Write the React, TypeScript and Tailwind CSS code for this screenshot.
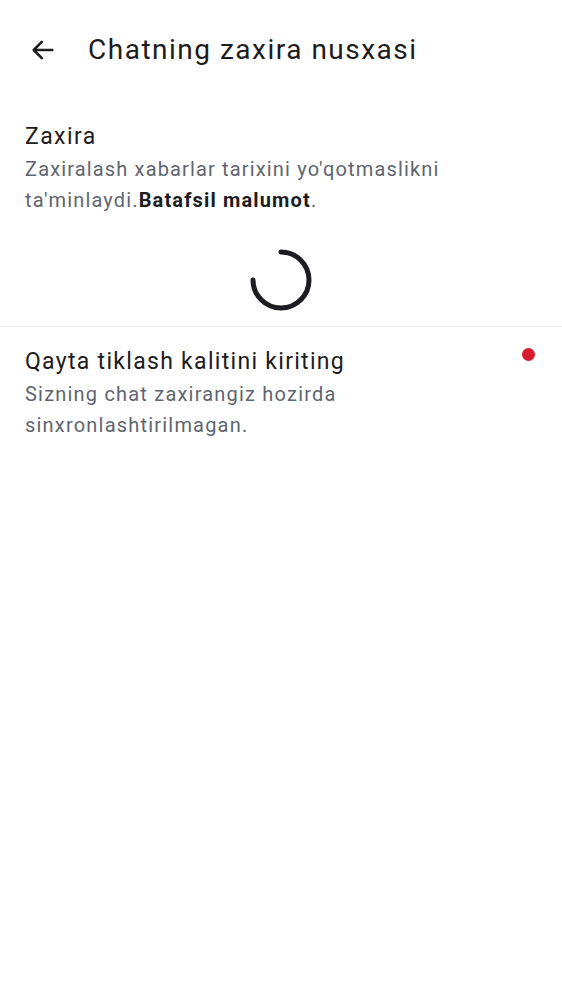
import React from "react";

export default function App() {
  return (
    <div className="w-[562px] h-[1000px] bg-white" style={{ fontFamily: "Roboto, 'Noto Sans', sans-serif" }}>
      <div className="h-[100px] flex items-center">
        <div className="w-[88px] flex justify-center">
          <svg width="28" height="28" viewBox="0 0 24 24" className="ml-[-2px]">
            <path d="M20 12H4.5M11 5l-7 7 7 7" fill="none" stroke="#1c1c21" strokeWidth="2.2" strokeLinecap="round" strokeLinejoin="round" />
          </svg>
        </div>
        <div className="text-[28px] tracking-[1.5px] text-[#1c1c21] leading-none">Chatning zaxira nusxasi</div>
      </div>
      <div className="px-[25px] pt-[22px] pr-[40px]">
        <div className="text-[23px] tracking-[1.4px] leading-[30px] text-[#1c1c21]">Zaxira</div>
        <p className="text-[20px] tracking-[1.15px] leading-[31px] text-[#5f6570] mt-[2px]">
          Zaxiralash xabarlar tarixini yo'qotmaslikni ta'minlaydi.<b className="font-bold text-[#1c1c21]">Batafsil malumot</b>.
        </p>
      </div>
      <div className="flex justify-center pt-[31px] pb-[13px]">
        <svg width="66" height="66" viewBox="0 0 66 66">
          <path d="M33 5 A28 28 0 1 1 5 33" fill="none" stroke="#1c1c21" strokeWidth="5" strokeLinecap="round" />
        </svg>
      </div>
      <div className="h-px bg-[#ececef]" />
      <div className="relative px-[25px] pt-[20px] pr-[40px]">
        <div className="text-[23px] tracking-[1.3px] leading-[30px] text-[#1c1c21]">Qayta tiklash kalitini kiriting</div>
        <div className="text-[20px] tracking-[1.2px] leading-[31px] text-[#5f6570] mt-[2px] max-w-[360px]">
          Sizning chat zaxirangiz hozirda sinxronlashtirilmagan.
        </div>
        <div className="absolute right-[27px] top-[21px] w-[13px] h-[13px] rounded-full bg-[#d71a2c]" />
      </div>
    </div>
  );
}
